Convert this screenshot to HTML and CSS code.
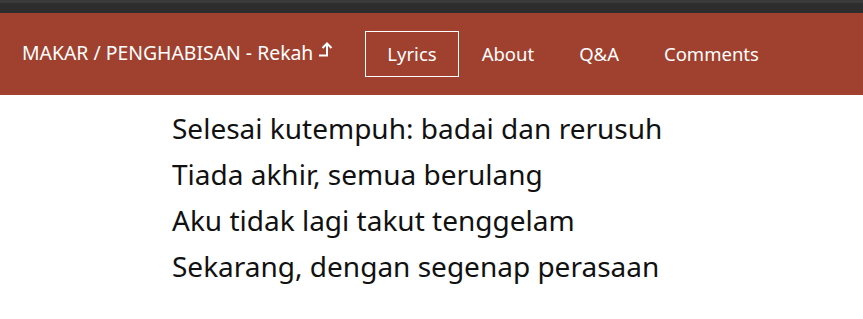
FILE: index.html
```html
<!DOCTYPE html>
<html>
<head>
  <meta charset="utf-8">
  <link rel="stylesheet" href="styles.css">
</head>
<body>
  <div class="topbar"></div>

  <!-- Song header -->
  <nav class="song-nav">
    <div class="song-title">
      MAKAR / PENGHABISAN - Rekah
      <svg class="jump-icon" width="15" height="16" viewBox="0 0 15 16">
        <path d="M1 14.5 H9 V2.5 M4.5 7 L9 2.5 L13.5 7" fill="none" stroke="#fff" stroke-width="2"/>
      </svg>
    </div>
    <a class="nav-tab active">Lyrics</a>
    <a class="nav-tab">About</a>
    <a class="nav-tab">Q&amp;A</a>
    <a class="nav-tab">Comments</a>
  </nav>

  <!-- Lyrics -->
  <div class="lyrics">
    <p>Selesai kutempuh: badai dan rerusuh</p>
    <p>Tiada akhir, semua berulang</p>
    <p>Aku tidak lagi takut tenggelam</p>
    <p>Sekarang, dengan segenap perasaan</p>
  </div>
</body>
</html>
```

FILE: styles.css
```css
body {
  margin: 0;
  font-family: "Noto Sans", sans-serif;
  background: #fff;
}

.topbar {
  height: 10px;
  background: #2d2d2d;
  border-top: 3px solid #3a3a3a;
}

.song-nav {
  display: flex;
  align-items: center;
  height: 82px;
  padding-left: 22px;
  background: #a0412f;
  color: #fff;
}

.song-title {
  display: flex;
  align-items: center;
  gap: 5px;
  font-size: 19.4px;
  margin-right: 32px;
  margin-top: -3px;
}

.jump-icon {
  margin-top: -8px;
}

.nav-tab {
  font-size: 18.5px;
  padding: 9px 21px 10px;
  border: 1px solid transparent;
  margin-right: 1px;
}

.nav-tab.active {
  border-color: #fff;
}

.lyrics {
  padding: 10px 0 0 172px;
}

.lyrics p {
  margin: 0;
  font-size: 28px;
  line-height: 46px;
  color: #111;
}
```
